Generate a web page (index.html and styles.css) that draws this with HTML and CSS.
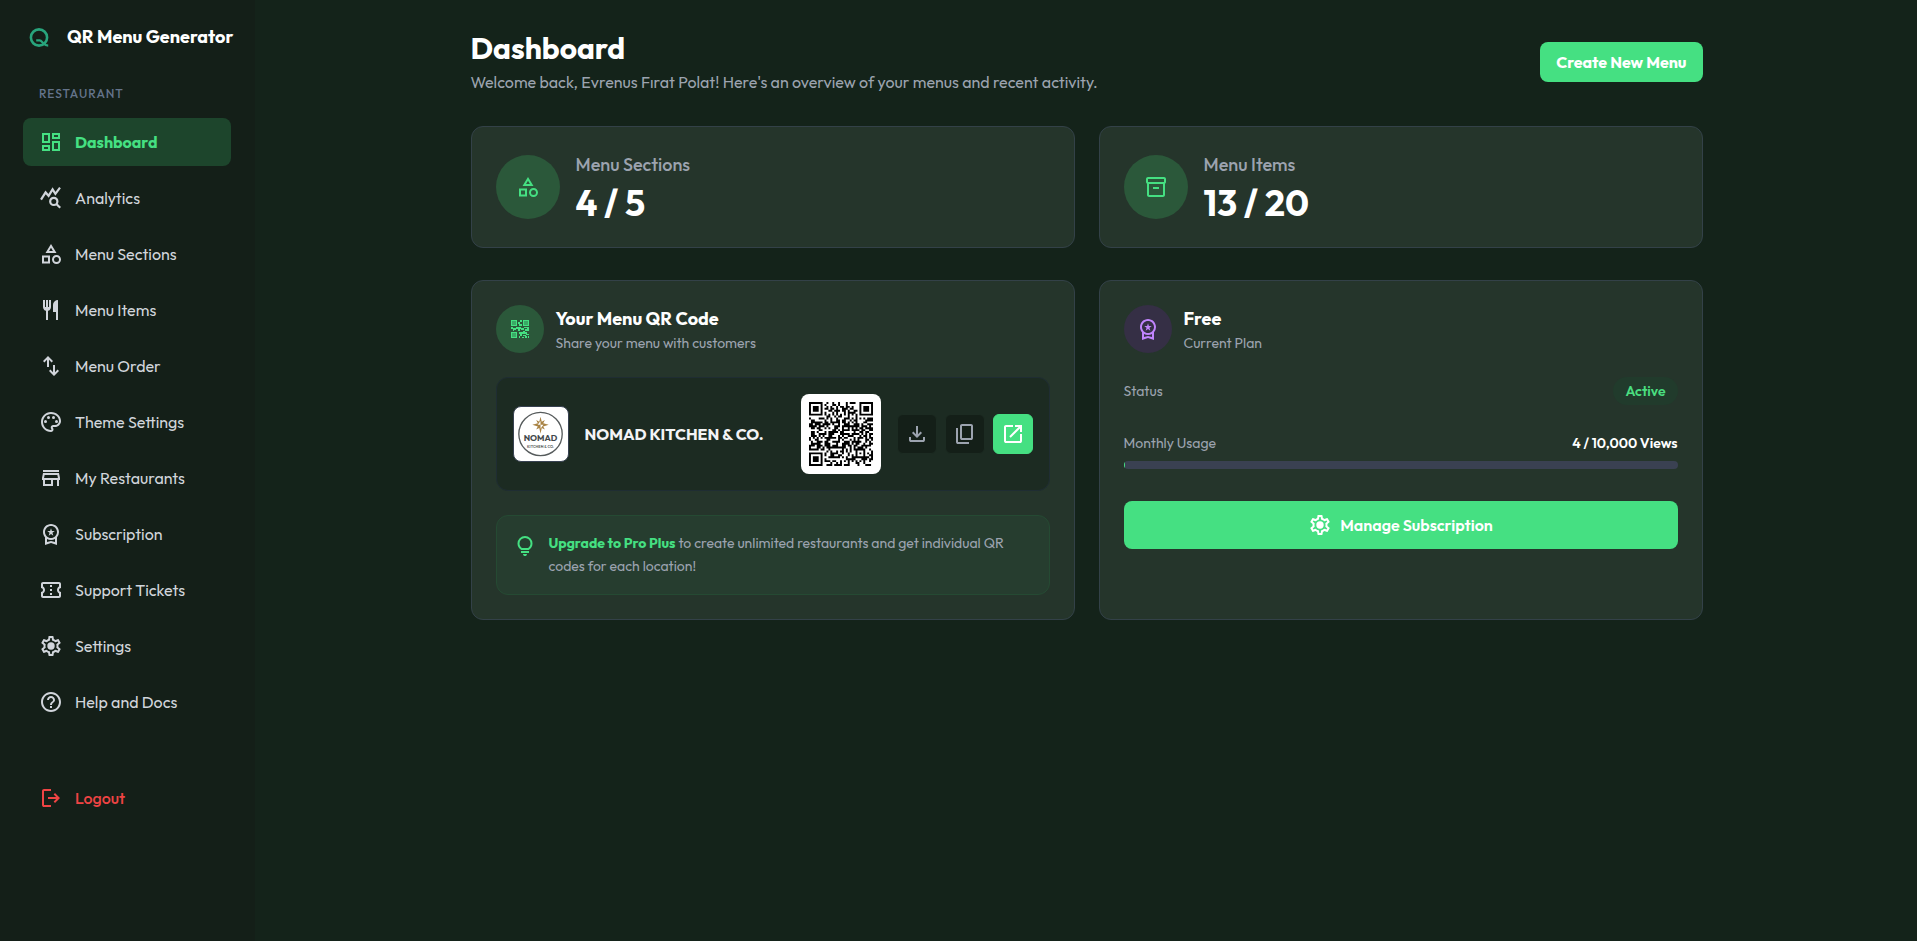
FILE: index.html
```html
<!DOCTYPE html>
<html lang="en">
<head>
	<meta charset="utf-8">
	<meta name="viewport" content="width=device-width, initial-scale=1">
	<title>Dashboard - QR Menu Generator</title>
	<link rel="stylesheet" href="styles.css">
</head>
<body>
	<!-- shared icons -->
	<svg class="sprite" aria-hidden="true">
		<symbol id="i-category" viewBox="0 0 24 24"><path d="M12 2l-5.5 9h11L12 2zm0 3.84L13.93 9h-3.87L12 5.84zM17.5 13c-2.49 0-4.5 2.01-4.5 4.5s2.01 4.5 4.5 4.5 4.5-2.01 4.5-4.5-2.01-4.5-4.5-4.5zm0 7a2.5 2.5 0 010-5 2.5 2.5 0 010 5zM3 21.5h8v-8H3v8zm2-6h4v4H5v-4z"/></symbol>
		<symbol id="i-premium" viewBox="0 0 24 24"><path d="M9.68 13.69L12 11.93l2.31 1.76-.88-2.85L15.75 9h-2.84L12 6.19 11.09 9H8.25l2.31 1.84-.88 2.85zM20 10c0-4.42-3.58-8-8-8s-8 3.58-8 8c0 2.03.76 3.87 2 5.28V23l6-2 6 2v-7.72A7.96 7.96 0 0020 10zm-8-6c3.31 0 6 2.69 6 6s-2.69 6-6 6-6-2.69-6-6 2.69-6 6-6zm0 15l-4 1.02v-3.1c1.18.68 2.54 1.08 4 1.08s2.82-.4 4-1.08v3.1L12 19z"/></symbol>
		<symbol id="i-settings" viewBox="0 0 24 24"><path d="M19.43 12.98c.04-.32.07-.64.07-.98 0-.34-.03-.66-.07-.98l2.11-1.65c.19-.15.24-.42.12-.64l-2-3.46a.5.5 0 00-.61-.22l-2.49 1c-.52-.4-1.08-.73-1.69-.98l-.38-2.65A.488.488 0 0014 2h-4c-.25 0-.46.18-.49.42l-.38 2.65c-.61.25-1.17.59-1.69.98l-2.49-1a.5.5 0 00-.61.22l-2 3.46c-.13.22-.07.49.12.64l2.11 1.65c-.04.32-.07.65-.07.98 0 .33.03.66.07.98l-2.11 1.65c-.19.15-.24.42-.12.64l2 3.46a.5.5 0 00.61.22l2.49-1c.52.4 1.08.73 1.69.98l.38 2.65c.03.24.24.42.49.42h4c.25 0 .46-.18.49-.42l.38-2.65c.61-.25 1.17-.59 1.69-.98l2.49 1a.5.5 0 00.61-.22l2-3.46c.12-.22.07-.49-.12-.64l-2.11-1.65zm-1.98-1.71c.04.31.05.52.05.73 0 .21-.02.43-.05.73l-.14 1.13.89.7 1.08.84-.7 1.21-1.27-.51-1.04-.42-.9.68c-.43.32-.84.56-1.25.73l-1.06.43-.16 1.13-.2 1.35h-1.4l-.19-1.35-.16-1.13-1.06-.43c-.43-.18-.83-.41-1.23-.71l-.91-.7-1.06.43-1.27.51-.7-1.21 1.08-.84.89-.7-.14-1.13c-.03-.31-.05-.54-.05-.74s.02-.43.05-.73l.14-1.13-.89-.7-1.08-.84.7-1.21 1.27.51 1.04.42.9-.68c.43-.32.84-.56 1.25-.73l1.06-.43.16-1.13.2-1.35h1.39l.19 1.35.16 1.13 1.06.43c.43.18.83.41 1.23.71l.91.7 1.06-.43 1.27-.51.7 1.21-1.07.85-.89.7.14 1.13z"/><circle cx="12" cy="12" r="3.7"/></symbol>
	</svg>

	<div class="app">
		<aside class="sidebar">
			<a class="brand" href="#">
				<svg class="brand-mark" viewBox="0 0 24 24" fill="none" stroke="currentColor" stroke-width="2.6"><circle cx="12" cy="12.5" r="8.1"/><path stroke-width="2.2" d="M9.2 15.4h3.4c2.6 0 3.8 5 8.6 5.2"/></svg>
				<span>QR Menu Generator</span>
			</a>
			<h2 class="nav-title">Restaurant</h2>
			<nav class="nav">
				<a class="nav-item active" href="#"><svg class="icon" viewBox="0 0 24 24"><path d="M19 5v2h-4V5h4M9 5v6H5V5h4m10 8v6h-4v-6h4M9 17v2H5v-2h4M21 3h-8v6h8V3zM11 3H3v10h8V3zm10 8h-8v10h8V11zm-10 4H3v6h8v-6z"/></svg>Dashboard</a>
				<a class="nav-item" href="#"><svg class="icon" viewBox="0 0 24 24"><g fill="none" stroke="currentColor" stroke-width="2.2"><path d="M2 13.6L6.6 6.4l3 3.4 4-6.4 2.8 4.4L21 1.6"/><circle cx="14.8" cy="15.4" r="3.6"/><path d="M17.4 18l3.8 3.8"/></g></svg>Analytics</a>
				<a class="nav-item" href="#"><svg class="icon"><use href="#i-category"/></svg>Menu Sections</a>
				<a class="nav-item" href="#"><svg class="icon" viewBox="0 0 24 24"><path d="M7 22v-9.15q-1.275-.35-2.1375-1.4T4 9V2h2v7h1V2h2v7h1V2h2v7q0 1.4-.8625 2.45T9 12.85V22H7Zm10 0v-8h-3V7q0-2.075 1.4625-3.5375T19 2v20h-2Z"/></svg>Menu Items</a>
				<a class="nav-item" href="#"><svg class="icon" viewBox="0 0 24 24"><path d="M8 13V5.825L5.425 8.4 4 7l5-5 5 5-1.425 1.4L10 5.825V13H8zm7 9-5-5 1.425-1.4L14 18.175V11h2v7.175l2.575-2.575L20 17l-5 5z"/></svg>Menu Order</a>
				<a class="nav-item" href="#"><svg class="icon" viewBox="0 0 24 24"><path d="M12 22C6.49 22 2 17.51 2 12S6.49 2 12 2s10 4.04 10 9c0 3.31-2.69 6-6 6h-1.77c-.28 0-.5.22-.5.5 0 .12.05.23.13.33.41.47.64 1.06.64 1.67 0 1.38-1.12 2.5-2.5 2.5zm0-18c-4.41 0-8 3.59-8 8s3.59 8 8 8c.28 0 .5-.22.5-.5 0-.16-.08-.28-.14-.35-.41-.46-.63-1.05-.63-1.65 0-1.38 1.12-2.5 2.5-2.5H16c2.21 0 4-1.79 4-4 0-3.86-3.59-7-8-7z"/><circle cx="6.5" cy="11.5" r="1.5"/><circle cx="9.5" cy="7.5" r="1.5"/><circle cx="14.5" cy="7.5" r="1.5"/><circle cx="17.5" cy="11.5" r="1.5"/></svg>Theme Settings</a>
				<a class="nav-item" href="#"><svg class="icon" viewBox="0 0 24 24"><path d="M18.36 9l.6 3H5.04l.6-3h12.72M20 4H4v2h16V4zm0 3H4l-1 5v2h1v6h10v-6h4v6h2v-6h1v-2l-1-5zM6 18v-4h6v4H6z"/></svg>My Restaurants</a>
				<a class="nav-item" href="#"><svg class="icon"><use href="#i-premium"/></svg>Subscription</a>
				<a class="nav-item" href="#"><svg class="icon" viewBox="0 0 24 24"><path d="M22 10V6c0-1.11-.9-2-2-2H4c-1.1 0-1.99.89-1.99 2v4c1.1 0 1.99.9 1.99 2s-.89 2-2 2v4c0 1.1.9 2 2 2h16c1.1 0 2-.9 2-2v-4c-1.1 0-2-.9-2-2s.9-2 2-2zm-2-1.46c-1.19.69-2 1.99-2 3.46s.81 2.77 2 3.46V18H4v-2.54c1.19-.69 2-1.99 2-3.46 0-1.48-.8-2.77-1.99-3.46L4 6h16v2.54zM11 15h2v2h-2zm0-4h2v2h-2zm0-4h2v2h-2z"/></svg>Support Tickets</a>
				<a class="nav-item" href="#"><svg class="icon"><use href="#i-settings"/></svg>Settings</a>
				<a class="nav-item" href="#"><svg class="icon" viewBox="0 0 24 24"><path d="M11 18h2v-2h-2v2zm1-16C6.48 2 2 6.48 2 12s4.48 10 10 10 10-4.48 10-10S17.52 2 12 2zm0 18c-4.41 0-8-3.59-8-8s3.59-8 8-8 8 3.59 8 8-3.59 8-8 8zm0-14c-2.21 0-4 1.79-4 4h2c0-1.1.9-2 2-2s2 .9 2 2c0 2-3 1.75-3 5h2c0-2.25 3-2.5 3-5 0-2.21-1.79-4-4-4z"/></svg>Help and Docs</a>
			</nav>
			<button class="nav-item logout" type="button"><svg class="icon" viewBox="0 0 24 24"><path d="M5 21q-.825 0-1.4125-.5875T3 19V5q0-.825.5875-1.4125T5 3h7v2H5v14h7v2H5Zm11-4-1.375-1.45 2.55-2.55H9v-2h8.175l-2.55-2.55L16 7l5 5-5 5Z"/></svg>Logout</button>
		</aside>

		<main class="main">
			<div class="container">
				<header class="page-head">
					<div>
						<h1>Dashboard</h1>
						<p>Welcome back, Evrenus Fırat Polat! Here's an overview of your menus and recent activity.</p>
					</div>
					<button class="btn" type="button">Create New Menu</button>
				</header>

				<div class="grid">
					<section class="card stat">
						<div class="round round-lg"><svg class="icon"><use href="#i-category"/></svg></div>
						<div>
							<p class="stat-label">Menu Sections</p>
							<p class="stat-value">4 / 5</p>
						</div>
					</section>
					<section class="card stat">
						<div class="round round-lg"><svg class="icon" viewBox="0 0 24 24"><path d="M20 2H4c-1 0-2 .9-2 2v3.01c0 .72.43 1.34 1 1.69V20c0 1.1 1.1 2 2 2h14c.9 0 2-.9 2-2V8.7c.57-.35 1-.97 1-1.69V4c0-1.1-1-2-2-2zm-1 18H5V9h14v11zm1-13H4V4h16v3zM9 12h6v2H9z"/></svg></div>
						<div>
							<p class="stat-label">Menu Items</p>
							<p class="stat-value">13 / 20</p>
						</div>
					</section>

					<section class="card">
						<div class="card-head">
							<div class="round"><svg class="icon" viewBox="0 0 24 24" shape-rendering="crispEdges"><path fill-opacity=".6" d="M4 4h4v4H4zM16 4h4v4h-4zM4 16h4v4H4z"/><path fill-rule="evenodd" d="M3 3h6v6H3zM4 4v4h4V4zM15 3h6v6h-6zM16 4v4h4V4zM3 15h6v6H3zM4 16v4h4v-4z"/><path d="M12 3h2v2h-2zM10 5h2v2h-2zM11 7h3v2h-3zM3 10h2v2H3zM5 11h3v2H5zM8 10h5v2H8zM10 12h2v2h-2zM13 11h3v2h-3zM16 10h3v1h-3zM19 10h2v4h-2zM17 12h2v2h-2zM5 13h1v1H5zM11 15h4v2h-4zM12 17h2v2h-2zM11 19h1v2h-1zM15 14h2v3h-2zM17 15h2v2h-2zM18 17h3v1h-3zM15 18h3v1h-3zM14 20h2v1h-2zM17 19h2v2h-2zM20 19h1v2h-1z"/></svg></div>
							<div>
								<h3>Your Menu QR Code</h3>
								<p>Share your menu with customers</p>
							</div>
						</div>
						<div class="restaurant">
							<svg class="rest-logo" viewBox="0 0 56 56" role="img" aria-label="Nomad Kitchen logo">
								<circle cx="27.5" cy="28" r="22.5" fill="none" stroke="#565b5c" stroke-width="1.4"/>
								<path fill="#a98344" d="M27.5 10l1.3 5.3 3.2-1.7-1.7 3.2 5.7 1.7-5.7 1.7 1.7 3.2-3.2-1.7-1.3 6-1.3-6-3.2 1.7 1.7-3.2-5.7-1.7 5.7-1.7-1.7-3.2 3.2 1.7z"/>
								<path fill="#fff" d="M27.5 14.5v4h-3zM27.5 22.5v-4h3z"/>
								<text class="logo-name" x="27.5" y="35" text-anchor="middle">NOMAD</text>
								<text class="logo-sub" x="27.5" y="42" text-anchor="middle">KITCHEN &amp; CO.</text>
							</svg>
							<span class="rest-name">NOMAD KITCHEN &amp; CO.</span>
							<svg class="qr" id="qr" viewBox="0 0 33 33" role="img" aria-label="Menu QR code"></svg>
							<div class="actions">
								<button class="btn-icon" type="button" aria-label="Download"><svg class="icon" viewBox="0 0 24 24"><path d="M12 16l-5-5 1.4-1.45 2.6 2.6V4h2v8.15l2.6-2.6L17 11l-5 5Zm-6 4q-.825 0-1.4125-.5875T4 18v-3h2v3h12v-3h2v3q0 .825-.5875 1.4125T18 20H6Z"/></svg></button>
								<button class="btn-icon" type="button" aria-label="Copy link"><svg class="icon" viewBox="0 0 24 24"><path d="M9 18q-.825 0-1.4125-.5875T7 16V4q0-.825.5875-1.4125T9 2h9q.825 0 1.4125.5875T20 4v12q0 .825-.5875 1.4125T18 18H9Zm0-2h9V4H9v12Zm-4 6q-.825 0-1.4125-.5875T3 20V6h2v14h11v2H5Z"/></svg></button>
								<button class="btn-icon primary" type="button" aria-label="Open menu"><svg class="icon" viewBox="0 0 24 24"><path d="M5 21q-.825 0-1.4125-.5875T3 19V5q0-.825.5875-1.4125T5 3h7v2H5v14h14v-7h2v7q0 .825-.5875 1.4125T19 21H5Zm4.7-5.3-1.4-1.4L17.6 5H14V3h7v7h-2V6.4l-9.3 9.3Z"/></svg></button>
							</div>
						</div>
						<div class="notice">
							<svg class="icon" viewBox="0 0 24 24"><path d="M12 22q-.825 0-1.4125-.5875T10 20h4q0 .825-.5875 1.4125T12 22Zm-4-3v-2h8v2H8Zm.25-3q-1.725-1.025-2.7375-2.75T4.5 9.5q0-3.125 2.1875-5.3125T12 2q3.125 0 5.3125 2.1875T19.5 9.5q0 2.025-1.0125 3.75T15.75 16h-7.5Zm.6-2h6.3q1.125-.8 1.7375-1.975T17.5 9.5q0-2.3-1.6-3.9T12 4Q9.7 4 8.1 5.6T6.5 9.5q0 1.35.6125 2.525T8.85 14Z"/></svg>
							<p><a href="#">Upgrade to Pro Plus</a> to create unlimited restaurants and get individual QR codes for each location!</p>
						</div>
					</section>

					<section class="card">
						<div class="card-head">
							<div class="round purple"><svg class="icon"><use href="#i-premium"/></svg></div>
							<div>
								<h3>Free</h3>
								<p>Current Plan</p>
							</div>
						</div>
						<div class="row">
							<span>Status</span>
							<span class="badge">Active</span>
						</div>
						<div class="usage">
							<div class="row">
								<span>Monthly Usage</span>
								<strong>4 / 10,000 Views</strong>
							</div>
							<div class="bar"><div class="bar-fill" style="width:0.04%"></div></div>
						</div>
						<button class="btn btn-wide" type="button"><svg class="icon"><use href="#i-settings"/></svg>Manage Subscription</button>
					</section>
				</div>
			</div>
		</main>
	</div>
	<script src="qr.js"></script>
</body>
</html>
```
FILE: styles.css
```css
* { box-sizing: border-box; }
body, h1, h2, h3, p { margin: 0; }
body {
	background: #14231a;
	color: #fff;
	font-family: Outfit, Lato, "Open Sans", sans-serif;
	font-size: 16px;
	line-height: 24px;
}
a { color: inherit; text-decoration: none; }
button {
	font: inherit;
	color: inherit;
	border: none;
	cursor: pointer;
}
.sprite { display: none; }
.icon {
	width: 24px;
	height: 24px;
	flex: none;
	fill: currentColor;
}

.app {
	display: flex;
	min-height: 100vh;
}

/* sidebar */
.sidebar {
	width: 256px;
	flex: none;
	padding: 16px 24px 24px 23px;
	background: #141f18;
	border-right: 1px solid #14231a;
}
.brand {
	display: flex;
	align-items: center;
	gap: 16px;
	height: 42px;
	padding-left: 4px;
	font-size: 18px;
	font-weight: 700;
	white-space: nowrap;
}
.brand-mark {
	width: 24px;
	height: 24px;
	flex: none;
	color: #28a47c;
}
.nav-title {
	margin: 28px 0 16px 16px;
	font-size: 12px;
	line-height: 16px;
	font-weight: 500;
	letter-spacing: 1px;
	text-transform: uppercase;
	color: #64748b;
}
.nav {
	display: flex;
	flex-direction: column;
	gap: 8px;
}
.nav-item {
	display: flex;
	align-items: center;
	gap: 12px;
	width: 100%;
	height: 48px;
	padding: 0 16px;
	border-radius: 8px;
	background: none;
	color: #d1d5db;
}
.nav-item.active {
	background: #1d452c;
	color: #45e082;
	font-weight: 700;
}
.nav-item.logout {
	margin-top: 48px;
	color: #ef4444;
	font-weight: 500;
}

/* main */
.main { flex: 1; min-width: 0; }
.container {
	max-width: 1280px;
	margin: 0 auto;
	padding: 24px;
}
.page-head {
	display: flex;
	align-items: center;
	justify-content: space-between;
	margin: 4px 0 30px;
}
h1 {
	font-size: 30px;
	line-height: 40px;
	font-weight: 700;
}
.page-head p { line-height: 28px; color: #9ca3af; }
.btn {
	height: 40px;
	padding: 0 16px;
	border-radius: 8px;
	background: #45e082;
	font-weight: 700;
}
.btn-wide {
	display: flex;
	align-items: center;
	justify-content: center;
	gap: 8px;
	width: 100%;
	height: 48px;
	margin-top: 32px;
	font-weight: 600;
}

.grid {
	display: grid;
	grid-template-columns: 1fr 1fr;
	gap: 32px 24px;
}
.card {
	padding: 24px;
	border: 1px solid #334148;
	border-radius: 12px;
	background: #25352b;
}
.stat {
	display: flex;
	align-items: center;
	gap: 16px;
}
.round {
	display: flex;
	align-items: center;
	justify-content: center;
	width: 48px;
	height: 48px;
	flex: none;
	border-radius: 50%;
	background: #2b583a;
	color: #45e082;
}
.round-lg { width: 64px; height: 64px; }
.round.purple { background: #352f45; color: #c084fc; }
.stat-label {
	font-size: 18px;
	line-height: 28px;
	font-weight: 500;
	color: #9ca3af;
}
.stat-value {
	margin-top: 4px;
	font-size: 36px;
	line-height: 40px;
	font-weight: 700;
}
.card-head {
	display: flex;
	align-items: center;
	gap: 12px;
	margin-bottom: 24px;
}
.card-head h3 {
	font-size: 18px;
	line-height: 28px;
	font-weight: 700;
}
.card-head p, .row, .notice p { font-size: 14px; line-height: 20px; color: #9ca3af; }

/* restaurant box */
.restaurant {
	display: flex;
	align-items: center;
	gap: 16px;
	padding: 16px;
	border: 1px solid #1f2d33;
	border-radius: 12px;
	background: #1c2b22;
}
.rest-logo {
	width: 56px;
	height: 56px;
	flex: none;
	border: 1px solid #374151;
	border-radius: 8px;
	background: #fff;
}
.logo-name { font-size: 9px; font-weight: 700; fill: #43494c; }
.logo-sub { font-size: 4px; font-weight: 600; fill: #565b5c; }
.rest-name { flex: 1; font-weight: 700; color: #f3f4f6; }
.qr {
	width: 80px;
	height: 80px;
	flex: none;
	padding: 8px;
	border-radius: 8px;
	background: #fff;
}
.actions { display: flex; gap: 8px; }
.btn-icon {
	display: flex;
	align-items: center;
	justify-content: center;
	width: 40px;
	height: 40px;
	padding: 0;
	border: 1px solid #1c2b22;
	border-radius: 6px;
	background: #141f18;
	color: #9ca3af;
}
.btn-icon.primary {
	border-color: #45e082;
	background: #45e082;
	color: #fff;
}
.notice {
	display: flex;
	align-items: center;
	gap: 12px;
	margin-top: 24px;
	padding: 16px;
	border: 1px solid #254a33;
	border-radius: 12px;
	background: #263d2f;
}
.notice .icon { align-self: flex-start; margin-top: 2px; color: #45e082; }
.notice p { line-height: 23px; }
.notice a { color: #45e082; font-weight: 700; }

/* plan */
.row {
	display: flex;
	align-items: center;
	justify-content: space-between;
}
.row strong { color: #fff; font-weight: 600; }
.badge {
	padding: 4px 12px;
	border-radius: 14px;
	background: #213b2c;
	color: #4ade80;
	font-weight: 600;
}
.usage { margin-top: 28px; }
.bar {
	height: 8px;
	margin-top: 8px;
	border-radius: 4px;
	overflow: hidden;
	background: #3a4152;
}
.bar-fill {
	min-width: 1px;
	height: 100%;
	background: #45e082;
}
```
FILE: qr.js
```js
// draws the menu code as one path, one unit per module
(function () {
	var size = 33, seed = 4119, d = '';
	function rnd() {
		seed = (seed * 1103515245 + 12345) % 2147483648;
		return seed / 2147483648;
	}
	// square ring pattern centred on cx, cy; null when outside
	function ring(x, y, cx, cy, max, light) {
		var r = Math.max(Math.abs(x - cx), Math.abs(y - cy));
		return r > max ? null : r !== light && r !== 4;
	}
	for (var y = 0; y < size; y++) {
		for (var x = 0; x < size; x++) {
			var on = rnd() > 0.48;
			var f = ring(x, y, 3, 3, 4, 2);
			if (f === null) f = ring(x, y, size - 4, 3, 4, 2);
			if (f === null) f = ring(x, y, 3, size - 4, 4, 2);
			if (f === null) f = ring(x, y, size - 7, size - 7, 2, 1);
			if (f === null && (x === 6 || y === 6)) f = (x + y) % 2 === 0;
			if (f !== null) on = f;
			if (on) d += 'M' + x + ' ' + y + 'h1v1h-1z';
		}
	}
	var path = document.createElementNS('http://www.w3.org/2000/svg', 'path');
	path.setAttribute('d', d);
	document.getElementById('qr').appendChild(path);
})();
```
